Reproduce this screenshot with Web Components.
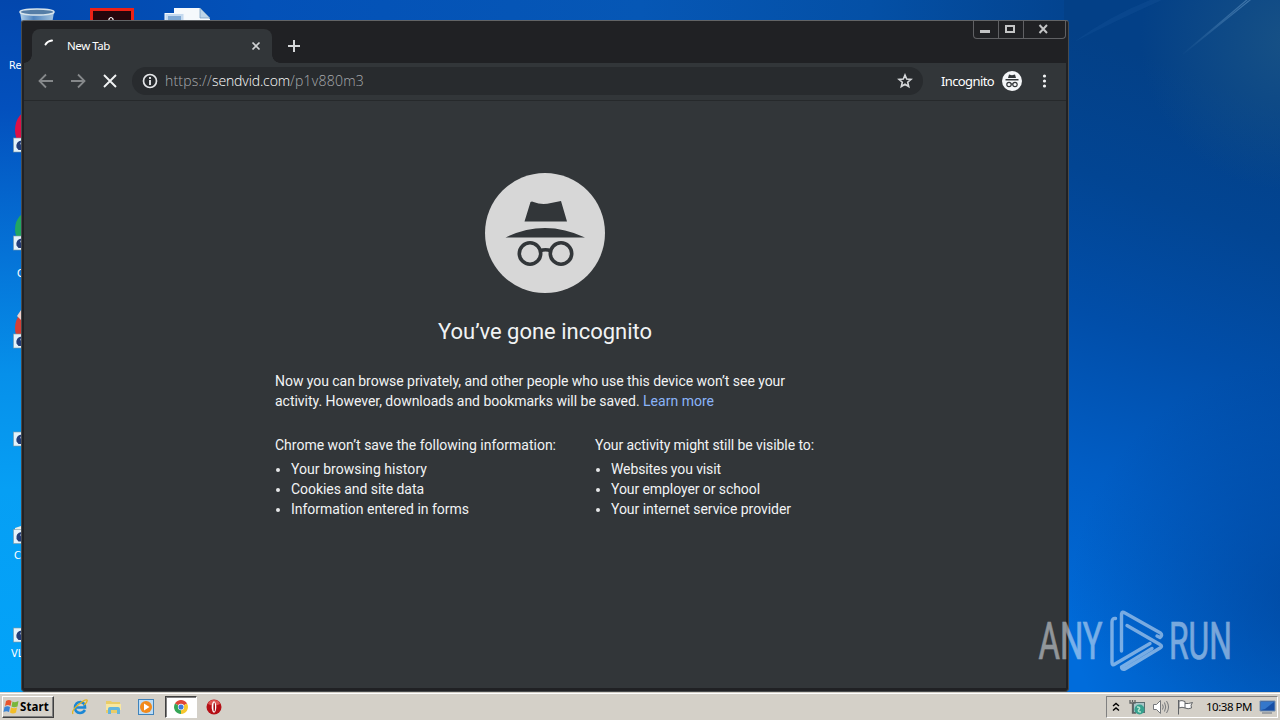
<!DOCTYPE html>
<html lang="en">
<head>
<meta charset="utf-8">
<title>Desktop</title>
<style>
    html, body {
        margin: 0;
        width: 1280px;
        height: 720px;
        overflow: hidden;
    }
    body {
        font-family: Roboto, "Liberation Sans", sans-serif;
    }
</style>
</head>
<body>
<desk-top>
    <browser-window>
        <browser-tab slot="tab">New Tab</browser-tab>
        <tool-bar slot="toolbar"></tool-bar>
        <incognito-page></incognito-page>
    </browser-window>
    <task-bar slot="taskbar"></task-bar>
</desk-top>

<script>
//--------------------------------------------------------
// Base
//--------------------------------------------------------

class BaseElement extends HTMLElement {
    constructor() {
        super();
        this.attachShadow({ mode: "open" });
        this.render();
    }

    render() {}
}

//--------------------------------------------------------
// Fit text: one line tracked out to a given width
//--------------------------------------------------------

class FitText extends BaseElement {
    connectedCallback() {
        const span = this.shadowRoot.querySelector("span");
        const target = parseFloat(this.getAttribute("width"));
        const count = this.textContent.length;
        const natural = span.getBoundingClientRect().width;
        if (target && natural) {
            span.style.letterSpacing = (target - natural) / count + "px";
        }
    }

    render() {
        this.shadowRoot.innerHTML = `
          <style>
          :host { display: block; flex: none; width: max-content; }
          span { display: block; width: max-content; white-space: pre; }
          </style>
          <span><slot></slot></span>
      `;
    }
}

//--------------------------------------------------------
// Desktop
//--------------------------------------------------------

class DeskTop extends BaseElement {
    render() {
        const arrow = (y) => `
            <g transform="translate(13.500 ${y})">
              <rect width="15" height="14" fill="#e4f2fa" stroke="#7d98a5" stroke-width=".6"/>
              <path d="M8 2.500Q2 3.500 3 9.500L5 12 8.500 12V7C7 7 6 5 8.500 3.500z" fill="#243e78"/>
            </g>`;
        this.shadowRoot.innerHTML = `
          <style>
          :host {
              display: block;
              position: relative;
              width: 1280px;
              height: 720px;
              overflow: hidden;
              background: #0050ae;
          }
          .wallpaper, .watermark {
              position: absolute;
              left: 0;
              top: 0;
              width: 1280px;
              height: 720px;
          }
          .label {
              position: absolute;
              color: #fff;
              font: 11px/14px "DejaVu Sans Condensed", "DejaVu Sans", sans-serif;
          }
          .window {
              position: absolute;
              left: 21px;
              top: 20px;
          }
          .bar {
              position: absolute;
              left: 0;
              right: 0;
              bottom: 0;
          }
          </style>
          <svg class="wallpaper" viewBox="0 0 1280 720">
            <defs>
              <linearGradient id="left" x1="0" y1="0" x2="0" y2="1">
                <stop offset="0" stop-color="#0347ad"/>
                <stop offset=".15" stop-color="#0350bd"/>
                <stop offset=".36" stop-color="#0574d8"/>
                <stop offset=".52" stop-color="#0690ea"/>
                <stop offset=".68" stop-color="#069ff4"/>
                <stop offset="1" stop-color="#02a4fa"/>
              </linearGradient>
              <linearGradient id="top" x1="0" y1="0" x2="1" y2="0">
                <stop offset="0" stop-color="#0347ad"/>
                <stop offset=".2" stop-color="#0351b8"/>
                <stop offset=".5" stop-color="#0657b5"/>
                <stop offset=".68" stop-color="#0450a6"/>
                <stop offset=".83" stop-color="#034490"/>
                <stop offset="1" stop-color="#114c87"/>
              </linearGradient>
              <linearGradient id="right" gradientUnits="userSpaceOnUse" x1="1240" y1="90" x2="1040" y2="640">
                <stop offset="0" stop-color="#034087"/>
                <stop offset=".22" stop-color="#024593"/>
                <stop offset=".45" stop-color="#014ea9"/>
                <stop offset=".7" stop-color="#015dc4"/>
                <stop offset="1" stop-color="#006cdb"/>
              </linearGradient>
              <radialGradient id="shade" gradientUnits="userSpaceOnUse" cx="1310" cy="600" r="240">
                <stop offset="0" stop-color="#003f90" stop-opacity=".65"/>
                <stop offset="1" stop-color="#003f90" stop-opacity="0"/>
              </radialGradient>
              <radialGradient id="glow" gradientUnits="userSpaceOnUse" cx="1290" cy="40" r="150">
                <stop offset="0" stop-color="#1c5585" stop-opacity=".8"/>
                <stop offset="1" stop-color="#1c5585" stop-opacity="0"/>
              </radialGradient>
              <linearGradient id="ray" gradientUnits="userSpaceOnUse" x1="1180" y1="55" x2="1250" y2="0">
                <stop offset="0" stop-color="#4d82b5" stop-opacity="0"/>
                <stop offset="1" stop-color="#4d82b5" stop-opacity=".8"/>
              </linearGradient>
              <linearGradient id="can" x1="0" y1="0" x2="1" y2="0">
                <stop offset="0" stop-color="#b4d2ea"/>
                <stop offset=".4" stop-color="#4f83bd"/>
                <stop offset="1" stop-color="#a5c4df"/>
              </linearGradient>
            </defs>
            <rect width="1280" height="24" fill="url(#top)"/>
            <rect width="24" height="720" fill="url(#left)"/>
            <rect x="1064" width="216" height="720" fill="url(#right)"/>
            <rect x="1064" y="300" width="216" height="420" fill="url(#shade)"/>
            <rect x="1064" width="216" height="200" fill="url(#glow)"/>
            <path d="M1248 -1 1183 54 1250 0z" fill="none" stroke="url(#ray)" stroke-width="1.200"/>
            <path d="M1074 42Q1110 16 1150 0L1162 0Q1115 21 1074 42z" fill="#2b6cac" opacity=".16"/>
            <path d="M20 12 22 24H52L54 12z" fill="url(#can)"/>
            <ellipse cx="37" cy="12" rx="17" ry="3" fill="#557da6" stroke="#d7e4ec" stroke-width="1.500"/>
            <rect x="91.500" y="9.500" width="41" height="15" fill="#26060c" stroke="#ed2217" stroke-width="3"/>
            <path d="M109 22V19Q111 16 113 19V22" fill="none" stroke="#fff" stroke-width="1.200"/>
            <path d="M174 8H200L210 19V24H174z" fill="#f5f9fc"/>
            <path d="M200 8V18H210z" fill="#bdd5e8" stroke="#7199bd" stroke-width=".7"/>
            <rect x="165" y="13.500" width="19" height="9" fill="#c5daef" stroke="#f3f8fc"/>
            <path d="M168 17H181M168 19H181" stroke="#3d79b8"/>
            <ellipse cx="31" cy="130" rx="16" ry="20" fill="#dc1047"/>
            <ellipse cx="31" cy="229" rx="16" ry="18" fill="#21a662"/>
            <ellipse cx="31" cy="328" rx="16" ry="19" fill="#d53f35"/>
            <path d="M17 316 21 310V320z" fill="#eed0ca"/>
            <path d="M15 528 21 526V531H15z" fill="#e8eee9"/>
            ${[138, 236, 334, 432, 529.5, 628].map(arrow).join("")}
          </svg>
          <div class="label" style="left:9px;top:59px">Re</div>
          <div class="label" style="left:17px;top:267px">C</div>
          <div class="label" style="left:14px;top:549px">C</div>
          <div class="label" style="left:11px;top:647px">VL</div>
          <div class="window"><slot></slot></div>
          <div class="bar"><slot name="taskbar"></slot></div>
          <svg class="watermark" viewBox="0 0 1280 720">
            <g opacity=".5" fill="#f0f5fb" font-family="Roboto" font-size="51" font-weight="400">
              <g stroke="#f0f5fb" stroke-width=".7">
                <text x="1038.500" y="659" textLength="64" lengthAdjust="spacingAndGlyphs">ANY</text>
                <text x="1169" y="659" textLength="63" lengthAdjust="spacingAndGlyphs">RUN</text>
              </g>
              <g fill="none" stroke="#f0f5fb" stroke-width="3.400" stroke-linecap="round" stroke-linejoin="round">
                <path d="M1115.500 618.500Q1112 618 1112 622V662.500Q1112 666 1115 664L1150 643.500"/>
                <path d="M1121.500 651V614Q1122 611 1125 613L1160.500 633Q1163 635.500 1160 637.500L1157 636"/>
                <path d="M1127 625.500 1160 644.500Q1163 646 1160 648L1125 669Q1121.500 670 1121.500 667L1152 648.500"/>
              </g>
            </g>
          </svg>
      `;
    }
}

//--------------------------------------------------------
// Browser window
//--------------------------------------------------------

class BrowserWindow extends BaseElement {
    render() {
        this.shadowRoot.innerHTML = `
          <style>
          :host {
              display: flex;
              flex-direction: column;
              box-sizing: border-box;
              width: 1048px;
              height: 672px;
              padding: 0 2px 3px;
              border: 1px solid #484b4d;
              border-top: 1px solid #626466;
              border-radius: 3px 3px 4px 4px;
              background: #202124;
              overflow: hidden;
          }
          .strip {
              display: flex;
              align-items: flex-start;
              height: 42px;
              flex: none;
          }
          .tab { margin: 8px 0 0 0; }
          .plus { margin: 18px 0 0 15px; display: block; }
          .spacer { flex: 1; }
          .buttons {
              display: flex;
              box-sizing: border-box;
              height: 18px;
              border: 1px solid #606164;
              border-top: 0;
              border-radius: 0 0 4px 4px;
          }
          .buttons svg { display: block; }
          .buttons svg + svg { border-left: 1px solid #606164; }
          </style>
          <div class="strip">
            <div class="tab"><slot name="tab"></slot></div>
            <svg class="plus" width="14" height="14"><path d="M7 1V13M1 7H13" stroke="#d5d7d9" stroke-width="2"/></svg>
            <div class="spacer"></div>
            <div class="buttons">
              <svg width="24" height="17"><rect x="6" y="9" width="10" height="3" fill="#c3c4c5"/></svg>
              <svg width="24" height="17"><rect x="7" y="5" width="8" height="6" fill="none" stroke="#c3c4c5" stroke-width="2"/></svg>
              <svg width="41" height="17"><path d="M15.500 4 23 12M23 4 15.500 12" stroke="#c3c4c5" stroke-width="2"/></svg>
            </div>
          </div>
          <slot name="toolbar"></slot>
          <slot></slot>
      `;
    }
}

class BrowserTab extends BaseElement {
    render() {
        this.shadowRoot.innerHTML = `
          <style>
          :host {
              display: flex;
              align-items: center;
              position: relative;
              box-sizing: border-box;
              width: 240px;
              height: 34px;
              margin-left: 8px;
              padding: 0 10px 0 11px;
              border-radius: 8px 8px 0 0;
              background: #323639;
              color: #fff;
              font: 11.5px/14px "Noto Sans", sans-serif;
          }
          /* flared feet of the tab */
          :host::before, :host::after {
              content: "";
              position: absolute;
              bottom: 0;
              width: 8px;
              height: 8px;
          }
          :host::before {
              left: -8px;
              background: radial-gradient(circle at 0 0, transparent 7.5px, #323639 8px);
          }
          :host::after {
              right: -8px;
              background: radial-gradient(circle at 100% 0, transparent 7.5px, #323639 8px);
          }
          .spin { margin-right: 8px; }
          .close { margin-left: auto; }
          </style>
          <svg class="spin" width="16" height="16"><path d="M2.500 6.500Q4.500 3 9 2.500" fill="none" stroke="#fff" stroke-width="2" stroke-linecap="round"/></svg>
          <fit-text width="43">New Tab</fit-text>
          <svg class="close" width="12" height="12"><path d="M2.500 2.500 9.500 9.500M9.500 2.500 2.500 9.500" stroke="#d0d2d4" stroke-width="1.700"/></svg>
      `;
    }
}

//--------------------------------------------------------
// Toolbar
//--------------------------------------------------------

class ToolBar extends BaseElement {
    render() {
        this.shadowRoot.innerHTML = `
          <style>
          :host {
              display: flex;
              align-items: center;
              box-sizing: border-box;
              flex: none;
              height: 38px;
              padding: 0 14px 1px 14px;
              border-bottom: 1px solid #26292b;
              background: #323639;
              color: #fff;
              font-family: "Noto Sans", sans-serif;
          }
          svg { display: block; flex: none; }
          .nav { display: flex; gap: 16px; }
          .omnibox {
              display: flex;
              align-items: center;
              box-sizing: border-box;
              flex: none;
              width: 791px;
              height: 28px;
              margin-left: 14px;
              padding: 0 10px;
              border-radius: 14px;
              background: #282b2e;
              font: 300 14px/20px "Open Sans", "Noto Sans", sans-serif;
          }
          .url { display: flex; margin-left: 7px; color: #a8abae; }
          .host { color: #fff; }
          .star { margin-left: auto; }
          .name { margin-left: 18px; font-size: 13px; line-height: 18px; }
          .face { margin-left: 8px; }
          .dots { margin-left: 18px; }
          </style>
          <div class="nav">
            <svg width="16" height="16"><path d="M15 8H2M8 1.500 1.500 8 8 14.500" fill="none" stroke="#85888a" stroke-width="1.800"/></svg>
            <svg width="16" height="16"><path d="M1 8H14M8 1.500 14.500 8 8 14.500" fill="none" stroke="#85888a" stroke-width="1.800"/></svg>
            <svg width="16" height="16"><path d="M2 2 14 14M14 2 2 14" stroke="#f1f3f4" stroke-width="1.900"/></svg>
          </div>
          <div class="omnibox">
            <svg width="16" height="16"><circle cx="8" cy="8" r="6.500" fill="none" stroke="#e4e6e8" stroke-width="1.700"/><path d="M8 7V12M8 4V6" stroke="#e4e6e8" stroke-width="1.900"/></svg>
            <div class="url"><fit-text width="47">https://</fit-text><fit-text class="host" width="78">sendvid.com</fit-text><fit-text width="74">/p1v880m3</fit-text></div>
            <svg class="star" width="16" height="16"><path d="M8 2 9.700 6 14 6.400 10.700 9.200 11.700 13.500 8 11.200 4.300 13.500 5.300 9.200 2 6.400 6.300 6z" fill="none" stroke="#d5d7d9" stroke-width="1.600"/></svg>
          </div>
          <fit-text class="name" width="53">Incognito</fit-text>
          <svg class="face" width="20" height="20" viewBox="0 0 20 20">
            <circle cx="10" cy="10" r="10" fill="#f4f6f8"/>
            <path d="M7 3.500 10 4.200 13 3.500 14 7H6zM3.500 8H16.500V9.500H3.500z" fill="#323639"/>
            <g fill="none" stroke="#323639" stroke-width="1.200"><circle cx="7" cy="13.500" r="2.200"/><circle cx="13" cy="13.500" r="2.200"/><path d="M9 13H11"/></g>
          </svg>
          <svg class="dots" width="8" height="16" fill="#f1f3f4"><circle cx="4.500" cy="3" r="1.600"/><circle cx="4.500" cy="8" r="1.600"/><circle cx="4.500" cy="13" r="1.600"/></svg>
      `;
    }
}

//--------------------------------------------------------
// Incognito page
//--------------------------------------------------------

class IncognitoPage extends BaseElement {
    render() {
        this.shadowRoot.innerHTML = `
          <style>
          :host {
              display: flex;
              flex-direction: column;
              align-items: center;
              flex: 1;
              background: #323639;
              color: #f1f3f4;
              font: 14px/20px Roboto, sans-serif;
          }
          .icon { display: block; margin-top: 72px; }
          h1 {
              margin: 25px 0 0;
              font-size: 22px;
              font-weight: 400;
              line-height: 28px;
          }
          .text {
              display: flex;
              flex-direction: column;
              width: 540px;
              margin-top: 25px;
          }
          .line { display: flex; }
          a { color: #8ab4f8; font-size: 14px; }
          .lists {
              display: grid;
              grid-template-columns: 320px 220px;
              margin-top: 24px;
          }
          ul { margin: 4px 0 0; padding-left: 16px; list-style: none; }
          li { height: 20px; position: relative; }
          li::before {
              content: "";
              position: absolute;
              left: -15px;
              top: 9px;
              width: 4px;
              height: 4px;
              border-radius: 50%;
              background: #e5e7e8;
          }
          </style>
          <svg class="icon" width="120" height="120" viewBox="0 0 120 120">
            <circle cx="60" cy="60" r="60" fill="#d7d7d7"/>
            <path d="M39.500 48.500 45.500 29Q47 28 48.500 29Q57 32.500 66 30L76 28 82 48.500zM20.500 64.500Q40 55 60 55T100 64.500z" fill="#323639"/>
            <g fill="none" stroke="#323639" stroke-width="3.600"><circle cx="45" cy="80.500" r="10.700"/><circle cx="76" cy="80.500" r="10.700"/><path d="M55 78Q60.500 75.500 66 78"/></g>
          </svg>
          <h1><fit-text width="214">You’ve gone incognito</fit-text></h1>
          <div class="text">
            <div class="line"><fit-text width="510">Now you can browse privately, and other people who use this device won’t see your</fit-text></div>
            <div class="line"><fit-text width="368">activity. However, downloads and bookmarks will be saved. </fit-text><a><fit-text width="71">Learn more</fit-text></a></div>
            <div class="lists">
              <div>
                <fit-text width="281">Chrome won’t save the following information:</fit-text>
                <ul>
                  <li><fit-text width="136">Your browsing history</fit-text></li>
                  <li><fit-text width="133">Cookies and site data</fit-text></li>
                  <li><fit-text width="178">Information entered in forms</fit-text></li>
                </ul>
              </div>
              <div>
                <fit-text width="219">Your activity might still be visible to:</fit-text>
                <ul>
                  <li><fit-text width="110">Websites you visit</fit-text></li>
                  <li><fit-text width="149">Your employer or school</fit-text></li>
                  <li><fit-text width="180">Your internet service provider</fit-text></li>
                </ul>
              </div>
            </div>
          </div>
      `;
    }
}

//--------------------------------------------------------
// Taskbar
//--------------------------------------------------------

class TaskBar extends BaseElement {
    render() {
        this.shadowRoot.innerHTML = `
          <style>
          :host {
              display: flex;
              align-items: flex-start;
              box-sizing: border-box;
              height: 28px;
              padding: 3px 2px 0;
              border-top: 1px solid #d4d0c8;
              box-shadow: inset 0 1px #fff;
              background: #d4d0c8;
              color: #000;
              font: 11.5px/14px "Noto Sans", sans-serif;
          }
          svg { display: block; flex: none; }
          .start {
              display: flex;
              align-items: center;
              box-sizing: border-box;
              width: 52px;
              height: 22px;
              border: 1px solid;
              border-color: #fff #404040 #404040 #fff;
              box-shadow: inset -1px -1px #808080;
              font-weight: 700;
          }
          .launch { display: flex; margin-left: 9px; }
          .item {
              display: flex;
              align-items: center;
              justify-content: center;
              box-sizing: border-box;
              width: 33.500px;
              height: 22px;
          }
          .active {
              width: 32px;
              margin: 0 1px;
              border: 1px solid;
              border-color: #404040 #fff #fff #404040;
              box-shadow: inset 1px 1px #808080;
              background: #fff;
          }
          .tray {
              display: flex;
              align-items: center;
              box-sizing: border-box;
              width: 172px;
              height: 22px;
              margin-left: auto;
              padding: 0 1px 0 5px;
              border: 1px solid;
              border-color: #808080 #fff #fff #808080;
          }
          .net { margin-left: 9px; }
          .vol { margin-left: 7px; }
          .flag { margin-left: 7px; }
          .time { margin-left: 12px; }
          .show { margin-left: auto; }
          </style>
          <div class="start">
            <svg width="17" height="16" viewBox="0 0 17 16">
              <path d="M3 2Q6 0 8.500 2L7.500 7Q5 5 2 7z" fill="#e8542c"/>
              <path d="M9.500 2.500Q12 4 15.500 2L14.500 7.500Q11 9 8.500 7.500z" fill="#79b63c"/>
              <path d="M1.500 8Q4.500 6.500 7 8L6 13Q3.500 11.500.500 13z" fill="#3984d6"/>
              <path d="M8 8.500Q11 10 14 8.500L13 13.500Q10 15.500 7 13.500z" fill="#f2bd28"/>
            </svg>
            <fit-text width="29">Start</fit-text>
          </div>
          <div class="launch">
            <div class="item"><svg width="16" height="16" viewBox="0 0 16 16">
              <path d="M13 11Q11 14 8 14 3 13.500 3 8.500 3.500 3 8.500 3 13 3.500 13 8.500H4" fill="none" stroke="#1b87d5" stroke-width="2.600"/>
              <path d="M1 15Q-1 12 6 6T15 1Q16 3 12 6" fill="none" stroke="#e4b51f" stroke-width="1.300"/>
            </svg></div>
            <div class="item"><svg width="17" height="16" viewBox="0 0 17 16">
              <path d="M1 2H6L7 3H15V14H1z" fill="#e9cc68"/>
              <path d="M1 5H16V11H1z" fill="#f8e7a0"/>
              <path d="M3 15V10Q3 8 5 8H13Q15 8 15 10V15H12V11H6V15z" fill="#63b5de"/>
            </svg></div>
            <div class="item"><svg width="17" height="16" viewBox="0 0 17 16">
              <rect x=".500" y=".500" width="15" height="15" fill="#bcdcf5" stroke="#3f83bb"/>
              <circle cx="8" cy="8" r="6" fill="#f28a1b"/><path d="M6 4.500 11.500 8 6 11.500z" fill="#fff"/>
            </svg></div>
            <div class="item active"><svg width="14" height="14" viewBox="0 0 16 16">
              <path d="M8 8 1.100 4A8 8 0 0 1 14.900 4z" fill="#df4638"/>
              <path d="M8 8 1.100 4A8 8 0 0 0 8 16z" fill="#36a656"/>
              <path d="M8 8 14.900 4A8 8 0 0 1 8 16z" fill="#f7c72d"/>
              <circle cx="8" cy="8" r="3.600" fill="#fff"/><circle cx="8" cy="8" r="2.900" fill="#3f79dc"/>
            </svg></div>
            <div class="item"><svg width="16" height="16" viewBox="0 0 16 16">
              <circle cx="8" cy="8" r="7.500" fill="#b50f16"/><path d="M2 5Q3 1 8 1T14 5Q8 8 2 5z" fill="#de5552"/>
              <ellipse cx="8" cy="8" rx="2.300" ry="5.700" fill="#fff"/><ellipse cx="8.200" cy="8" rx=".8" ry="4.600" fill="#a30b12"/>
            </svg></div>
          </div>
          <div class="tray">
            <svg width="8" height="12"><path d="M1 5 4 2.500 7 5M1 9.500 4 7 7 9.500" fill="none" stroke="#000" stroke-width="1.400"/></svg>
            <svg class="net" width="17" height="16" viewBox="0 0 17 16">
              <rect x="4.500" y="3.500" width="11" height="10" fill="#a9c6c8" stroke="#5b6e70"/>
              <path d="M1 1V4H6V1M3.500 1V3M3.500 4V14H7" fill="none" stroke="#606464" stroke-width="1.300"/>
              <circle cx="10.500" cy="10.500" r="5" fill="#37a18e"/><path d="M8 8Q12 8 10 10.500T12 13" fill="none" stroke="#b4e4ce" stroke-width="1.500"/>
            </svg>
            <svg class="vol" width="17" height="16" viewBox="0 0 17 16" fill="none" stroke="#74777a">
              <path d="M.500 5.500H3.500L7.500 1.500V14.500L3.500 10.500H.500z" fill="#fff"/>
              <path d="M9.500 5.500Q11 8 9.500 10.500M11.500 3.500Q14 8 11.500 12.500M13.500 2Q17.500 8 13.500 14"/>
            </svg>
            <svg class="flag" width="17" height="16" viewBox="0 0 17 16" fill="#fff" stroke="#606366">
              <path d="M1.500 1V15.500M2 2Q5 1 8 2.500V9Q5 7.500 2 9zM8 4.500Q11 5 15.500 3.500Q13 6 14.500 9Q11 10.500 8 9"/>
            </svg>
            <fit-text class="time" width="46">10:38 PM</fit-text>
            <svg class="show" width="17" height="16" viewBox="0 0 17 16">
              <path d="M1 2H16V12H1z" fill="#174fa5" stroke="#748fae"/><path d="M2 3H15L6 10 2 11z" fill="#3577ca"/><path d="M3 14H13" stroke="#8c9299" stroke-width="1.500"/>
            </svg>
          </div>
      `;
    }
}

customElements.define("fit-text", FitText);
customElements.define("browser-tab", BrowserTab);
customElements.define("tool-bar", ToolBar);
customElements.define("incognito-page", IncognitoPage);
customElements.define("browser-window", BrowserWindow);
customElements.define("task-bar", TaskBar);
customElements.define("desk-top", DeskTop);
</script>
</body>
</html>
